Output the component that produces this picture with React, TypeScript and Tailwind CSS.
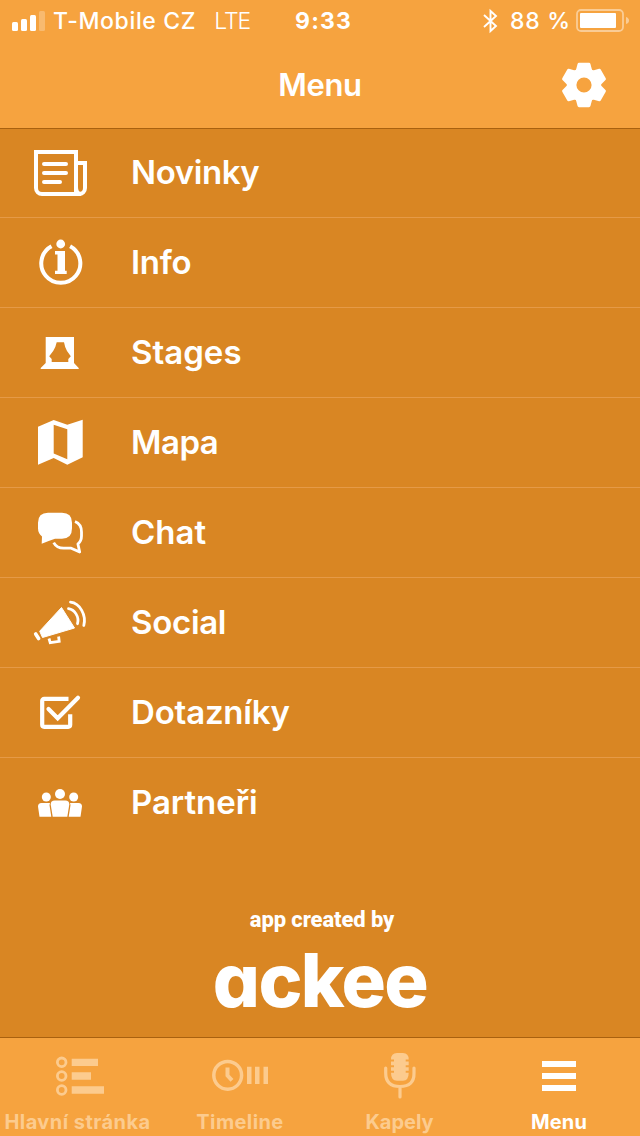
import type { ReactNode } from 'react';

type Item = { label: string; tracking: string; icon: ReactNode };

const GEAR_TEETH = [0, 60, 120, 180, 240, 300];

const menuItems: Item[] = [
  {
    label: 'Novinky',
    tracking: 'tracking-[-0.4px]',
    icon: (
      <g fill="none" stroke="currentColor" strokeWidth="4">
        <path d="M46 51V9H6v36a6 6 0 0 0 6 6h37a6 6 0 0 0 6-6V20h-9M46 44q0 7 5 7" />
        <path d="M14 21h22M14 30h22M14 39h16" strokeLinecap="round" />
      </g>
    ),
  },
  {
    label: 'Info',
    tracking: 'tracking-[-0.3px]',
    icon: (
      <>
        <path d="M21.5 13.2a19.5 19.5 0 1 0 18.6 0" fill="none" stroke="currentColor" strokeWidth="4" />
        <circle cx="30.7" cy="11" r="4.4" />
        <path d="M25 18h10v19.7h1.7V41H25v-3.3h2.5V21.5H25z" />
      </>
    ),
  },
  {
    label: 'Stages',
    tracking: 'tracking-[0px]',
    icon: (
      <path
        fillRule="evenodd"
        d="M15.7 14H44v26l4.7 5v1H10.7v-1l5-5zM26.7 19.3Q25.5 25 23.2 28L19.2 33.2 21.7 36V39H38.3V36L40.800 33.200 37 28Q35 25 34 19.300z"
      />
    ),
  },
  {
    label: 'Mapa',
    tracking: 'tracking-[-0.5px]',
    icon: (
      <path
        fillRule="evenodd"
        d="M8 13.7 23.7 7l13.6 4.7 15.4-5v37.6l-15.4 7.4L23.7 45 8 51.7zM23.7 11.7V40.5l13.6 5.8v-30z"
      />
    ),
  },
  {
    label: 'Chat',
    tracking: 'tracking-[0px]',
    icon: (
      <>
        <path d="M18 9.7h14q10 0 10 10v5.6q0 10.5-10 10.5h-7q-6 2-13.3 5l.3-7.3q-4-3-4-8.2v-5.6q0-10 10-10z" />
        <path
          d="M45 18.5q6.5 2.5 6.5 10.5v4q0 5-3.6 8l1.8 8-8.5-3.8h-7.5q-7 0-10-5.6"
          fill="none"
          stroke="currentColor"
          strokeWidth="2.8"
          strokeLinejoin="round"
        />
      </>
    ),
  },
  {
    label: 'Social',
    tracking: 'tracking-[-0.3px]',
    icon: (
      <>
        <path d="M31.5 14.5 44.5 35 12.5 44.5 9.7 38.2z" stroke="currentColor" strokeLinejoin="round" />
        <g fill="none" stroke="currentColor" strokeWidth="2.8" strokeLinecap="round">
          <path d="M5.7 41 8.6 45.5" strokeWidth="3.6" />
          <path d="M19 45.5l1.2 4.2 9-1.4-.6-4.8" strokeLinecap="butt" />
          <path d="M38.5 15.7c6 .8 11 8 9 15M40.5 9.2c9.5 1 16 13 13.3 23.3" />
        </g>
      </>
    ),
  },
  {
    label: 'Dotazníky',
    tracking: 'tracking-[-0.2px]',
    icon: (
      <g fill="none" stroke="currentColor" strokeWidth="4.2">
        <path d="M38.5 15.8H14.2a2 2 0 0 0-2 2v24a2 2 0 0 0 2 2h24a2 2 0 0 0 2-2V31.3" />
        <path d="M18.5 26l9.2 9.2L48 14.8" strokeLinecap="round" />
      </g>
    ),
  },
  {
    label: 'Partneři',
    tracking: 'tracking-[-0.05px]',
    icon: (
      <>
        <circle cx="30" cy="21" r="5" />
        <circle cx="16.3" cy="24" r="4.5" />
        <circle cx="43.7" cy="24" r="4.5" />
        <path d="M20.7 31.5q0-4 4-4h10.6q4 0 4 4l-2 12.2H22.7z" />
        <path d="M20 30h-8.5q-3.5 0-3.5 3.5l1.5 10.2h11.8L19.5 32z" />
        <path d="M40 30h8.5q3.5 0 3.5 3.5l-1.5 10.2H38.7L40.5 32z" />
      </>
    ),
  },
];

const tabs: Item[] = [
  {
    label: 'Hlavní stránka',
    tracking: 'tracking-[0.45px] -ml-[5px]',
    icon: (
      <>
        <g fill="none" stroke="currentColor" strokeWidth="2.8">
          <circle cx="11.7" cy="14.3" r="4.3" />
          <circle cx="11.7" cy="28" r="4.3" />
          <circle cx="11.7" cy="42" r="4.3" />
        </g>
        <path d="M21.7 10.7H48V18H21.7zM21.7 24.3H41v7.4H21.7zM21.7 38.3H54v7.4H21.7z" />
      </>
    ),
  },
  {
    label: 'Timeline',
    tracking: 'tracking-[0.4px]',
    icon: (
      <>
        <g fill="none" stroke="currentColor">
          <circle cx="17.7" cy="27.3" r="13.9" strokeWidth="3.5" />
          <path d="M17.5 19.5v8l4.5 4.8" strokeWidth="4" />
        </g>
        <path d="M37 18.7h4.5V36H37zM45 18.7h4.5V36H45zM53.5 18.7H58V36h-4.5z" />
      </>
    ),
  },
  {
    label: 'Kapely',
    tracking: 'tracking-[0px] -ml-px',
    icon: (
      <>
        <path d="M21 11.5Q21 5 27 5h6q5.7 0 5.7 6.5h-3v2h3v3.7h-3v2h3v3.6h-3v2h3q0 7.9-5.7 7.9h-6q-6 0-6-7.9h3v-2h-3v-3.6h3v-2h-3v-3.7h3v-2z" />
        <path
          d="M15.7 20v5q0 13.5 14.3 13.5T44 25v-5M30 38.5V49"
          fill="none"
          stroke="currentColor"
          strokeWidth="3.2"
          strokeLinecap="round"
        />
      </>
    ),
  },
  {
    label: 'Menu',
    tracking: 'tracking-[0.2px] -ml-0.5',
    icon: <path d="M12 13h34v6H12zM12 25h34v6H12zM12 37h34v6H12z" />,
  },
];

function Icon({ children, className = '' }: { children: ReactNode; className?: string }) {
  return (
    <svg viewBox="0 0 60 60" fill="currentColor" className={`size-[60px] shrink-0 ${className}`}>
      {children}
    </svg>
  );
}

function GearIcon() {
  return (
    <svg viewBox="-24 -24 48 48" fill="currentColor" stroke="currentColor" className="size-12">
      <circle r="12.4" fill="none" strokeWidth="9.6" />
      {GEAR_TEETH.map((angle) => (
        <path
          key={angle}
          d="M-7-13L-5-20.700H5L7-13z"
          transform={`rotate(${angle})`}
          strokeWidth="3"
          strokeLinejoin="round"
        />
      ))}
    </svg>
  );
}

function StatusBar() {
  return (
    <div className="grid h-[42px] grid-cols-[283px_1fr_158px] items-center pl-3 text-[23px] leading-[42px] font-medium">
      <div className="flex items-center">
        <svg viewBox="0 0 33 20" fill="currentColor" className="h-5 w-[33px]">
          <rect x="0" y="11" width="6" height="9" rx="1.5" />
          <rect x="9" y="8" width="6" height="12" rx="1.5" />
          <rect x="18" y="4" width="6" height="16" rx="1.5" />
          <rect x="27" y="0" width="6" height="20" rx="1.5" opacity="0.25" />
        </svg>
        <span className="ml-2 tracking-[0.65px]">T-Mobile CZ</span>
        <span className="ml-[18px] font-light tracking-[-1px]">LTE</span>
      </div>
      <span className="font-bold tracking-[1.2px]">9:33</span>
      <div className="flex items-center">
        <svg viewBox="0 0 16 26" className="h-[26px] w-4" fill="none" stroke="currentColor" strokeWidth="1.9">
          <path d="M2 7l12 11-5.500 5V3l5.500 5L2 19" />
        </svg>
        <span className="ml-3 tracking-[0.7px]">88 %</span>
        <svg viewBox="0 0 54 24" className="ml-[5px] h-6 w-[54px]" fill="currentColor">
          <rect x="1" y="1" width="46" height="21" rx="4" fill="none" stroke="currentColor" strokeWidth="1.8" opacity="0.45" />
          <rect x="4" y="4" width="36" height="15" rx="1" />
          <path d="M50 8q3 1 3 3.5T50 15z" opacity="0.45" />
        </svg>
      </div>
    </div>
  );
}

export default function App() {
  return (
    <div className="flex h-[1136px] w-[640px] flex-col overflow-hidden bg-[#d98623] font-['Inter','Liberation_Sans',sans-serif] text-white">
      <header className="relative h-32 shrink-0 bg-[#f6a33f] shadow-[0_1px_0_#a9610f]">
        <StatusBar />
        <div className="grid h-[86px] grid-cols-[110px_1fr_110px] items-center">
          <span />
          <h1 className="pt-px text-center text-[31px] font-semibold tracking-[-0.4px]">Menu</h1>
          <button className="flex justify-center pr-0.5" aria-label="Settings">
            <GearIcon />
          </button>
        </div>
      </header>

      <ul>
        {menuItems.map((item) => (
          <li
            key={item.label}
            className="flex h-[90px] items-start border-b border-[#e59a47] pl-[30px] last:border-transparent"
          >
            <Icon className="mt-[15px]">{item.icon}</Icon>
            <span className={`ml-[41px] text-[33px] leading-[88px] font-semibold ${item.tracking}`}>{item.label}</span>
          </li>
        ))}
      </ul>

      <div className="flex flex-1 flex-col items-center pt-[56px]">
        <p className="pl-1 font-['Roboto','Liberation_Sans',sans-serif] text-[22px] leading-[31px] font-extrabold tracking-[-0.1px]">
          app created by
        </p>
        <p className="pt-[13px] text-[74px] leading-[64px] font-extrabold tracking-[-1.6px] [font-feature-settings:'cv11']">
          ackee
        </p>
      </div>

      <nav className="relative grid h-[98px] shrink-0 grid-cols-4 bg-[#f6a33f] shadow-[0_-1px_0_#a9610f]">
        {tabs.map((tab) => (
          <button
            key={tab.label}
            className={`flex flex-col items-center pt-[10px] ${tab.label === 'Menu' ? 'text-white' : 'text-[#fccb8e]'}`}
          >
            <Icon>{tab.icon}</Icon>
            <span className={`text-[20px] leading-[28px] font-bold whitespace-nowrap ${tab.tracking}`}>{tab.label}</span>
          </button>
        ))}
      </nav>
    </div>
  );
}
